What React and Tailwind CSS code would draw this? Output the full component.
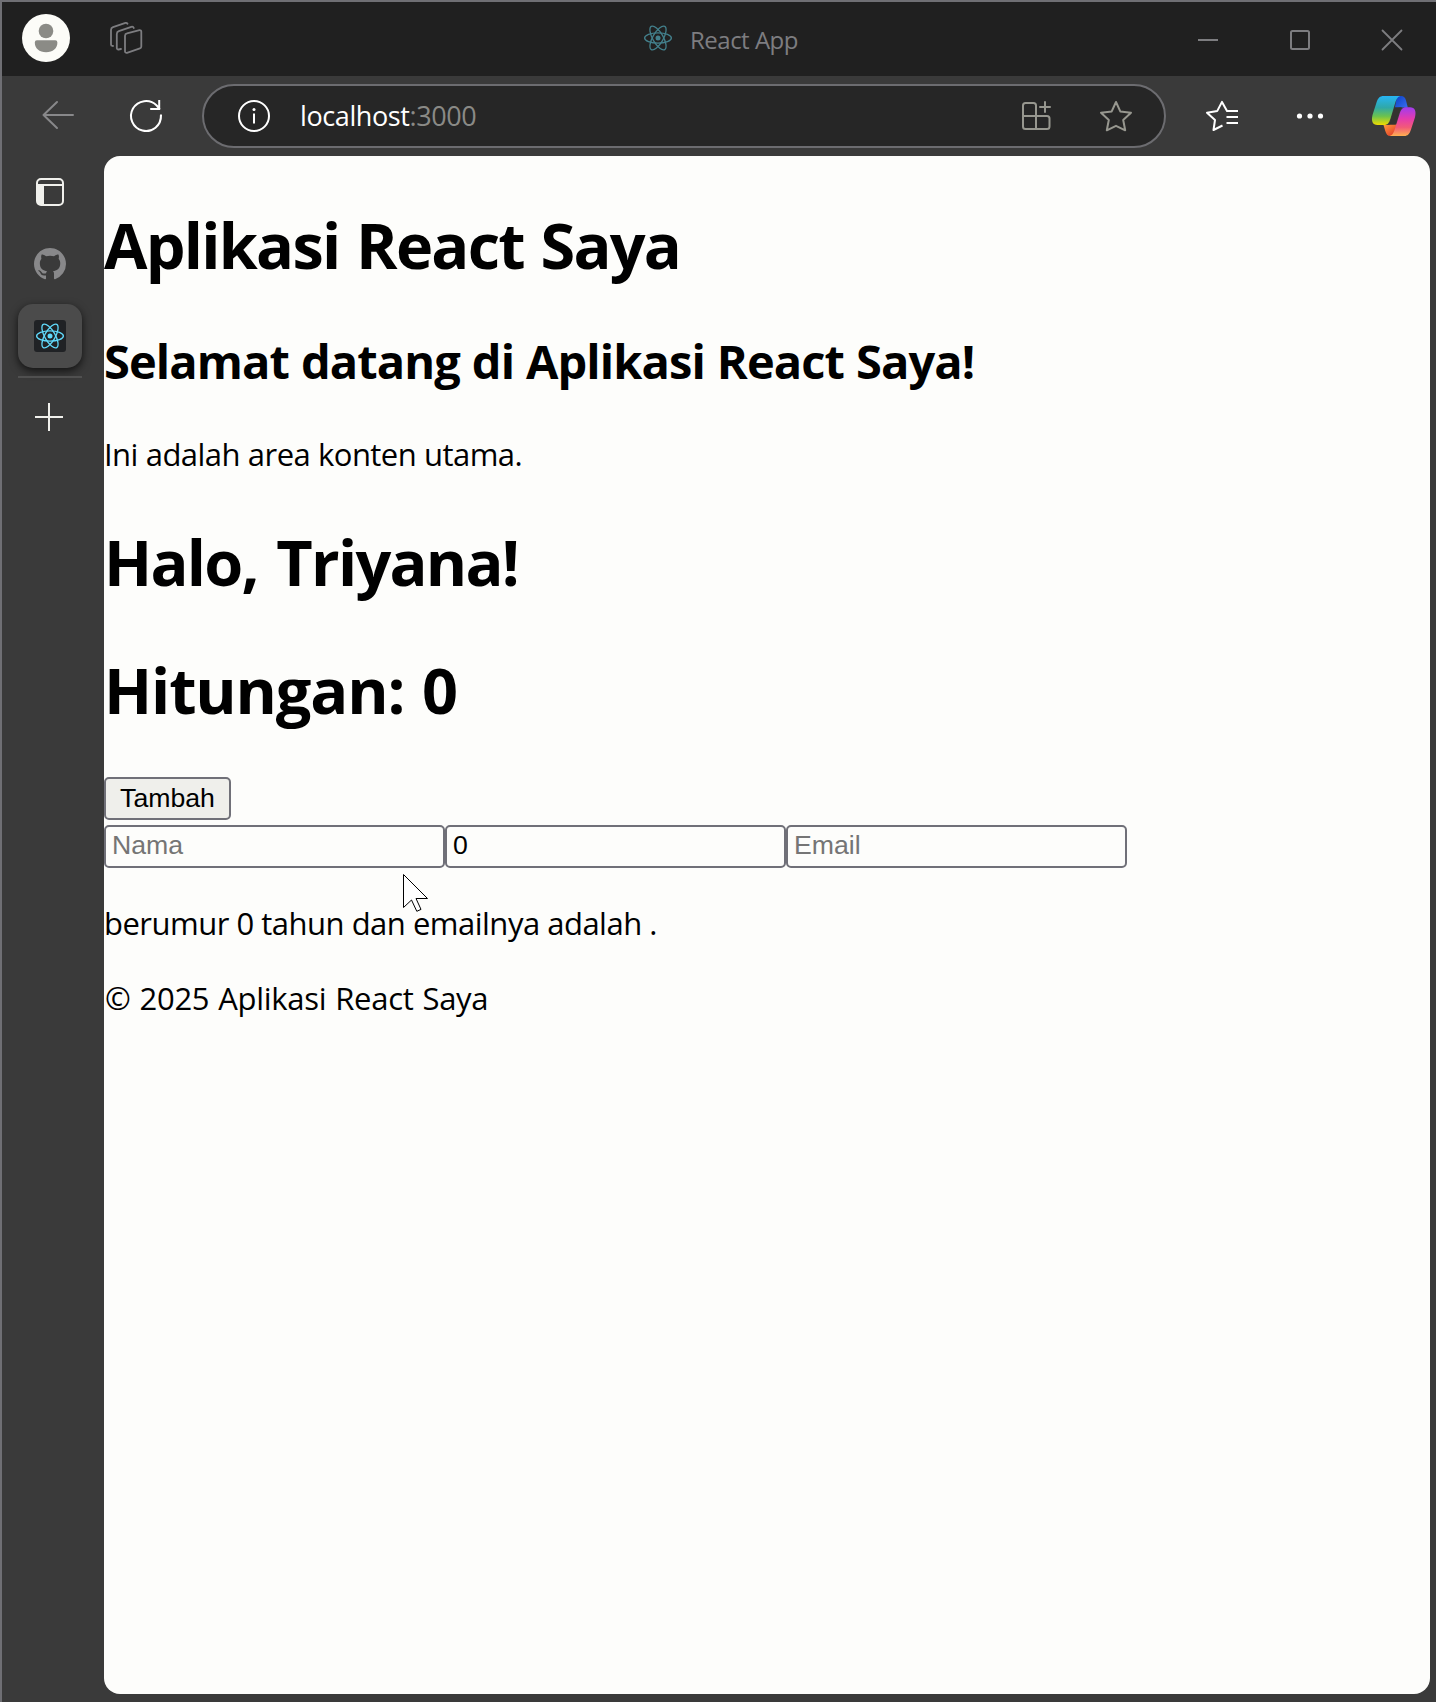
const UI = "font-['Open_Sans','Noto_Sans',sans-serif]";

function Icon({ box, className = "", sw = 2, children }) {
  const [, , w, h] = box.split(" ");
  return (
    <svg width={w} height={h} viewBox={box} fill="none" stroke="currentColor" strokeWidth={sw} strokeLinecap="round" strokeLinejoin="round" className={`shrink-0 ${className}`}>
      {children}
    </svg>
  );
}

function ReactLogo({ className }) {
  return (
    <svg width="30" height="28" viewBox="-15 -14 30 28" fill="none" stroke="currentColor" strokeWidth="1.3" className={`shrink-0 ${className}`}>
      <ellipse rx="13.4" ry="5.2" />
      <ellipse rx="13.4" ry="5.2" transform="rotate(60)" />
      <ellipse rx="13.4" ry="5.2" transform="rotate(120)" />
      <circle r="2.5" fill="currentColor" stroke="none" />
    </svg>
  );
}

function TitleBar() {
  return (
    <header className="flex h-[74px] items-start bg-[#202020] text-[#7d7d80]">
      <svg width="48" height="48" viewBox="22 14 48 48" className="mt-3 ml-5 shrink-0">
        <circle cx="46" cy="38" r="24" fill="#fcfcf8" />
        <circle cx="46" cy="31" r="7.3" fill="#8b8b86" />
        <path d="M37 40.3h18.2a2.2 2.2 0 0 1 2.2 2.2c0 6-4.500 9.700-11.300 9.700s-11.300-3.700-11.300-9.700a2.200 2.200 0 0 1 2.200-2.200z" fill="#8b8b86" />
      </svg>
      <Icon box="109 21 34 34" className="mt-[19px] ml-[39px]" sw={1.8}>
        <path d="M127 33.400L139.500 30.200a1.500 1.500 0 0 1 1.800 1.500V46.500a2 2 0 0 1-1.400 1.900L127 52.800a1.500 1.500 0 0 1-2-1.400V35.800a2.500 2.500 0 0 1 2-2.400z" />
        <path d="M121 49l-2.500.5a1.500 1.500 0 0 1-1.700-1.500V34a3 3 0 0 1 2-2.800l12.500-4.400a2 2 0 0 1 2.500 1.200" />
        <path d="M113 46l-.5-.1a1.500 1.500 0 0 1-1.500-1.500V30a3 3 0 0 1 2-2.800l12.500-4.300a1.800 1.800 0 0 1 2 .9" />
      </Icon>
      <ReactLogo className="mt-[22px] ml-[500px] text-[#43808c]" />
      <span className={`${UI} mt-[21px] ml-[17px] w-[119px] text-[24px] leading-[34px] tracking-[-0.5px] whitespace-nowrap`}>React App</span>
      <Icon box="1196 29 24 22" className="mt-[27px] ml-[387px]"><path d="M1198 40h20" strokeLinecap="butt" /></Icon>
      <Icon box="1289 29 22 22" className="mt-[27px] ml-[69px]"><rect x="1291" y="31" width="18" height="18" rx="1.5" /></Icon>
      <Icon box="1381 29 22 22" className="mt-[27px] ml-[70px]"><path d="M1382.500 30.500l19 19m0-19l-19 19" strokeWidth="1.800" /></Icon>
    </header>
  );
}

function Copilot() {
  return (
    <svg width="46" height="42" viewBox="1371 95 46 42" className="shrink-0">
      <defs>
        <linearGradient id="cpA" x1="0" y1="0" x2="0" y2="1">
          <stop offset="0" stopColor="#27b5f5" /><stop offset=".4" stopColor="#2fa8a8" /><stop offset=".7" stopColor="#6cc24e" /><stop offset="1" stopColor="#f0dc00" />
        </linearGradient>
        <linearGradient id="cpB" x1="0" y1="0" x2="0" y2="1">
          <stop offset="0" stopColor="#a03cf0" /><stop offset=".4" stopColor="#e43cae" /><stop offset=".7" stopColor="#f25a78" /><stop offset="1" stopColor="#ffb050" />
        </linearGradient>
        <linearGradient id="cpC" x1="0" y1="0" x2="1" y2="1">
          <stop offset="0" stopColor="#0a3fc4" /><stop offset="1" stopColor="#3c72f2" />
        </linearGradient>
        <linearGradient id="cpD" x1="0" y1="0" x2="1" y2="1">
          <stop offset="0" stopColor="#ff9a3c" /><stop offset="1" stopColor="#dc2c26" />
        </linearGradient>
      </defs>
      <path d="M1397 96h4c3 0 4.200 1.500 5 4.500l1.800 7h-6c-3 0-5 .3-7.300 2.500z" fill="url(#cpC)" />
      <path d="M1396 136h-5.500c-3 0-4.300-2-5.200-5l-1.800-6c3 0 5 .2 7-.5h8z" fill="url(#cpD)" />
      <path d="M1383.500 96h18c-3.500 0-5 2.500-6.500 7.500l-4.500 15c-1.400 4.500-3 6.500-6.500 6.500h-6.500c-5 0-6.500-4-5-10l4-12.500c1.400-4.500 3.500-6.500 7-6.500z" fill="url(#cpA)" />
      <path d="M1404.500 136h-16c3.500 0 5-2.500 6.500-7.500l4.500-14.500c1.400-4.500 3-6.800 6.500-6.800h4c5 0 6.500 4 5 10l-4 12.300c-1.400 4.500-3.500 6.500-6.500 6.500z" fill="url(#cpB)" />
      <path d="M1394.500 107.300h7.500c-1.500 1.500-2.500 3.700-3.300 6.500l-3.200 10.700h-6.500c.9-1.500 1.500-3.500 2.200-6z" fill="#34332f" />
    </svg>
  );
}

function Toolbar() {
  return (
    <nav className="flex h-20 items-start text-white">
      <Icon box="40 99 36 34" className="mt-[23px] ml-[38px] text-[#88888a]">
        <path d="M57 102L43.500 115l13.500 13M43.500 115H73" />
      </Icon>
      <Icon box="128 98 36 36" className="mt-[22px] ml-[52px]">
        <path d="M161 115.500a15 15 0 1 1-4.300-10l2.500 3M159.200 101v8h-8" strokeLinecap="square" strokeLinejoin="miter" />
      </Icon>
      <div className="mt-2 ml-[38px] flex h-16 w-[964px] items-center rounded-full border-2 border-[#6c6c70] bg-[#262626]">
        <Icon box="237 99 34 34" className="ml-[33px]">
          <circle cx="254" cy="116" r="15" />
          <path d="M254 113.500v10" strokeLinecap="butt" />
          <circle cx="254" cy="109.500" r="1.500" fill="currentColor" stroke="none" />
        </Icon>
        <span className={`${UI} ml-[29px] w-[300px] text-[27px] leading-[36px] tracking-[-0.4px] whitespace-nowrap`}>
          localhost<span className="text-[#8a8a86]">:3000</span>
        </span>
        <Icon box="1020 99 34 34" className="ml-[420px] text-[#97978f]">
          <path d="M1036 116V105.500a2.500 2.500 0 0 0-2.500-2.500h-8a2.500 2.500 0 0 0-2.500 2.500V126.500a2.500 2.500 0 0 0 2.500 2.500h21.500a2.500 2.500 0 0 0 2.500-2.500V118.500a2.500 2.500 0 0 0-2.500-2.500H1023M1036 116v13M1045 102v10M1040 107h10" />
        </Icon>
        <Icon box="1099 99 34 34" className="ml-[45px] text-[#97978f]">
          <path d="M1116 102l4.300 9.400 10.700 1.300-7.800 7.300 2 10.300-9.200-4.500-9.200 4.500 2-10.300-7.800-7.300 10.700-1.300z" />
        </Icon>
      </div>
      <Icon box="1204 99 36 34" className="mt-[23px] ml-[38px]">
        <path d="M1222.500 125.500l-9 4.500 1.500-10-8-7.300 10.300-1.800 4.700-9 5 9h11M1226.500 117H1238M1226.500 123H1238" strokeLinecap="butt" />
      </Icon>
      <Icon box="1295 106 32 20" className="mt-[30px] ml-[55px]">
        <g fill="currentColor" stroke="none"><circle cx="1299.500" cy="116" r="2.600" /><circle cx="1310" cy="116" r="2.600" /><circle cx="1320.500" cy="116" r="2.600" /></g>
      </Icon>
      <div className="mt-[19px] ml-[44px]"><Copilot /></div>
    </nav>
  );
}

function Sidebar() {
  return (
    <aside className="flex w-[102px] shrink-0 flex-col items-center pr-[6px]">
      <Icon box="35 177 30 30" className="mt-[21px] text-[#f0f0ec]">
        <rect x="37" y="179" width="26" height="26" rx="4" />
        <path d="M37 185h26" />
        <path d="M37 185h7v20h-3.500a3.500 3.500 0 0 1-3.500-3.500z" fill="currentColor" stroke="none" />
      </Icon>
      <svg width="32" height="32" viewBox="0 0 16 16" fill="#88888a" className="mt-[41px] shrink-0">
        <path d="M8 0C3.580 0 0 3.580 0 8c0 3.540 2.290 6.530 5.470 7.590.4.070.55-.17.55-.38 0-.19-.01-.82-.01-1.490-2.010.37-2.530-.49-2.690-.94-.09-.23-.48-.94-.82-1.130-.28-.15-.68-.52-.01-.53.63-.01 1.080.58 1.230.82.72 1.210 1.870.87 2.330.66.07-.52.28-.87.51-1.070-1.780-.2-3.640-.89-3.640-3.950 0-.87.31-1.590.82-2.150-.08-.2-.36-1.020.08-2.120 0 0 .67-.21 2.200.82.64-.18 1.320-.27 2-.27s1.360.09 2 .27c1.530-1.040 2.200-.82 2.200-.82.44 1.100.16 1.920.08 2.120.51.56.82 1.270.82 2.150 0 3.070-1.870 3.750-3.650 3.950.29.25.54.73.54 1.480 0 1.070-.01 1.930-.01 2.200 0 .21.15.46.55.38A8.010 8.010 0 0 0 16 8c0-4.420-3.580-8-8-8z" />
      </svg>
      <div className="mt-[24px] flex size-16 items-center justify-center rounded-[15px] bg-[#4b4b4b] shadow-[0_3px_8px_rgba(0,0,0,0.7)]">
        <div className="flex size-8 items-center justify-center rounded-[3px] bg-[#202225]">
          <ReactLogo className="text-[#61dafb]" />
        </div>
      </div>
      <div className="mt-2 h-[2px] w-16 bg-[#505050]" />
      <Icon box="34 402 30 30" className="mt-[24px] mr-[2px] text-[#f0f0ec]"><path d="M49 403v28M35 417h28" strokeLinecap="butt" /></Icon>
    </aside>
  );
}

function Field(props) {
  return (
    <input
      {...props}
      className="h-[43px] w-[341px] shrink-0 rounded-[5px] border-2 border-[#707078] bg-[#fdfdfb] px-[6px] pb-[2px] font-['Liberation_Sans',sans-serif] text-[26.67px] text-black placeholder:text-[#757575]"
    />
  );
}

function Content() {
  return (
    <main className={`${UI} relative h-[1538px] w-[1326px] shrink-0 overflow-hidden rounded-[16px] bg-[#fdfdfb] pt-[43px] whitespace-nowrap text-black`}>
      <h1 className="h-[85px] text-[63px] leading-[91px] font-bold tracking-[-1.75px] [word-spacing:2px]">Aplikasi React Saya</h1>
      <h2 className="mt-[43px] h-[64px] text-[47px] leading-[68px] font-bold tracking-[-0.9px] [word-spacing:0.6px]">Selamat datang di Aplikasi React Saya!</h2>
      <p className="mt-[40px] h-[43px] text-[31px] leading-[46px] tracking-[-0.55px] [word-spacing:0.4px]">Ini adalah area konten utama.</p>
      <h1 className="mt-[43px] h-[85px] text-[63px] leading-[89px] font-bold tracking-[-1.75px] [word-spacing:4px]">Halo, Triyana!</h1>
      <h1 className="mt-[43px] h-[85px] text-[63px] leading-[89px] font-bold tracking-[-1.15px] [word-spacing:2.5px]">Hitungan: 0</h1>
      <button className="mt-[47px] block h-[43px] w-[127px] rounded-[5px] border-2 border-[#707078] bg-[#efefeb] pb-px text-center font-['Liberation_Sans',sans-serif] text-[26.67px] leading-[38px]">Tambah</button>
      <div className="mt-[5px] flex">
        <Field placeholder="Nama" />
        <Field defaultValue="0" />
        <Field placeholder="Email" />
      </div>
      <p className="mt-[32px] h-[43px] text-[31px] leading-[46px] tracking-[-0.5px]">berumur 0 tahun dan emailnya adalah .</p>
      <p className="mt-[32px] h-[43px] pl-px text-[31px] leading-[46px] tracking-[-0.3px] [word-spacing:1.3px]">© 2025 Aplikasi React Saya</p>
      <svg width="27" height="40" viewBox="0 0 27 40" className="absolute top-[717px] left-[298px]">
        <path d="M1.500 1.500V34.500L9.500 27l5.300 11.300 4.200-1.900L14 25.500h11.500z" fill="#fff" stroke="#000" strokeWidth="1" />
      </svg>
    </main>
  );
}

export default function App() {
  return (
    <div className="h-[1702px] w-[1436px] overflow-hidden border-t-2 border-l-2 border-[#6f6f74] bg-[#3a3a3a]">
      <TitleBar />
      <Toolbar />
      <div className="flex">
        <Sidebar />
        <Content />
      </div>
    </div>
  );
}
